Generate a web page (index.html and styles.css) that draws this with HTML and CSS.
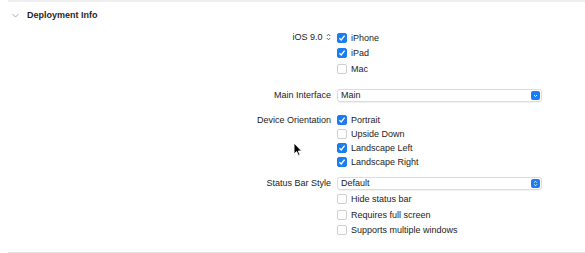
FILE: index.html
```html
<!DOCTYPE html>
<html lang="en">
<head>
  <meta charset="UTF-8">
  <title>Deployment Info</title>
  <meta name="viewport" content="width=device-width, initial-scale=1">
  <link rel="stylesheet" href="styles.css">
</head>
<body>
  <div class="rule"></div>
  <div class="section-head">
    <svg class="chevron" width="7" height="5" viewBox="0 0 7 5"><path d="M0.5 1 L3.5 4 L6.5 1" fill="none" stroke="#a8a8a8" stroke-width="1"/></svg>
    <span>Deployment Info</span>
  </div>

  <div class="form">
    <div class="field ios">
      <div class="label">iOS 9.0 <svg class="updown" width="5" height="8" viewBox="0 0 5 8"><path d="M0.8 3 L2.5 1.2 L4.2 3 M0.8 5 L2.5 6.8 L4.2 5" fill="none" stroke="#555" stroke-width="0.9"/></svg></div>
      <div class="options">
        <div class="opt"><span class="cb on"></span>iPhone</div>
        <div class="opt"><span class="cb on"></span>iPad</div>
        <div class="opt"><span class="cb"></span>Mac</div>
      </div>
    </div>

    <div class="field main">
      <div class="label">Main Interface</div>
      <div class="popup">
        <span>Main</span>
        <span class="pop-btn"><svg width="9" height="9" viewBox="0 0 9 9"><path d="M3 4 L4.5 5.5 L6 4" fill="none" stroke="#fff" stroke-width="1"/></svg></span>
      </div>
    </div>

    <div class="field orient">
      <div class="label">Device Orientation</div>
      <div class="options">
        <div class="opt"><span class="cb on"></span>Portrait</div>
        <div class="opt"><span class="cb"></span>Upside Down</div>
        <div class="opt"><span class="cb on"></span>Landscape Left</div>
        <div class="opt"><span class="cb on"></span>Landscape Right</div>
      </div>
    </div>

    <div class="field status">
      <div class="label">Status Bar Style</div>
      <div class="popup">
        <span>Default</span>
        <span class="pop-btn"><svg width="9" height="9" viewBox="0 0 9 9"><path d="M3.2 3.6 L4.5 2.3 L5.8 3.6 M3.2 5.4 L4.5 6.7 L5.8 5.4" fill="none" stroke="#fff" stroke-width="0.9"/></svg></span>
      </div>
    </div>

    <div class="field extra">
      <div class="label"></div>
      <div class="options">
        <div class="opt"><span class="cb"></span>Hide status bar</div>
        <div class="opt"><span class="cb"></span>Requires full screen</div>
        <div class="opt"><span class="cb"></span>Supports multiple windows</div>
      </div>
    </div>
  </div>

  <div class="rule bottom"></div>

  <svg class="cursor" width="10" height="15" viewBox="0 0 10 15"><path d="M1 1 L1 12 L3.6 9.6 L5.4 13.6 L7 12.9 L5.3 9 L8.6 9 Z" fill="#000" stroke="#fff" stroke-width="0.9"/></svg>
</body>
</html>
```

FILE: styles.css
```css
body {
  margin: 0;
  background: #fff;
  font-family: "Liberation Sans", Arial, sans-serif;
  font-size: 9px;
  color: #222;
  position: relative;
  height: 253px;
  overflow: hidden;
}
.rule {
  height: 2px;
  margin-left: 8px;
  background: #efefef;
}
.rule.bottom {
  height: 1px;
  margin-top: 14px;
  background: #e4e4e4;
}
.section-head {
  display: flex;
  align-items: center;
  height: 14px;
  margin-top: 6px;
  padding-left: 12px;
  font-weight: bold;
  font-size: 9px;
  color: #1f1f1f;
}
.chevron {
  margin-right: 8px;
}
.form {
  padding-right: 43px;
}
.field {
  display: grid;
  grid-template-columns: 331px 1fr;
  column-gap: 6px;
}
.label {
  text-align: right;
  height: 15.5px;
  line-height: 15.5px;
  white-space: nowrap;
}
.updown {
  vertical-align: -1px;
  margin-left: 1px;
}
.options {
  display: flex;
  flex-direction: column;
}
.opt {
  display: flex;
  align-items: center;
  height: 15.5px;
  white-space: nowrap;
}
.cb {
  width: 8px;
  height: 8px;
  border: 1px solid #cfcfcf;
  border-radius: 2px;
  background: #fff;
  margin-right: 4px;
  flex-shrink: 0;
  box-sizing: content-box;
}
.cb.on {
  border-color: #1b7cf3;
  background: #1b7cf3 url("data:image/svg+xml;utf8,<svg xmlns='http://www.w3.org/2000/svg' width='8' height='8' viewBox='0 0 8 8'><path d='M1.4 4.2 L3.2 6 L6.6 1.6' fill='none' stroke='white' stroke-width='1.3'/></svg>") center/8px 8px no-repeat;
}
.ios {
  margin-top: 8px;
}
.main {
  margin-top: 12px;
}
.orient {
  margin-top: 11px;
}
.orient .label,
.orient .opt {
  height: 14px;
  line-height: 14px;
}
.status {
  margin-top: 8px;
}
.main .label,
.status .label {
  height: 13px;
  line-height: 13px;
}
.popup {
  display: flex;
  align-items: center;
  justify-content: space-between;
  height: 11px;
  border: 1px solid #dcdcdc;
  border-radius: 3px;
  padding: 0 1px 0 3px;
  background: #fff;
  box-shadow: 0 0.5px 1px rgba(0,0,0,0.06);
}
.pop-btn {
  width: 9px;
  height: 9px;
  border-radius: 2px;
  background: #1b7cf3;
  display: flex;
}
.extra {
  margin-top: 2px;
}
.cursor {
  position: absolute;
  left: 293px;
  top: 142px;
}
```
